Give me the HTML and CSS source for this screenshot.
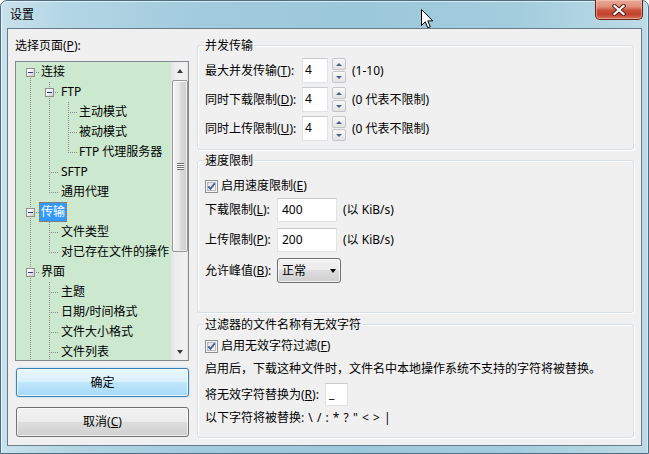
FILE: index.html
```html
<!DOCTYPE html>
<html lang="zh-CN">
<head>
<meta charset="utf-8">
<title>设置</title>
<link rel="stylesheet" href="styles.css">
</head>
<body>
<div class="win">
  <div class="titlebar">
    <span class="title">设置</span>
    <div class="close">
      <svg width="14" height="12" viewBox="0 0 14 12"><path d="M2.5 2 L11.5 10 M11.5 2 L2.5 10" stroke="#5b1f16" stroke-width="4.2" stroke-linecap="square" fill="none"/><path d="M2.5 2 L11.5 10 M11.5 2 L2.5 10" stroke="#ffffff" stroke-width="2.2" stroke-linecap="square" fill="none"/></svg>
    </div>
  </div>
  <div class="client">
    <div class="left">
      <div class="page-label">选择页面(<u>P</u>):</div>
      <div class="tree">
        <div class="tree-items">
          <div class="ti"><span class="c f"><i class="exp"></i></span><span class="lbl">连接</span></div>
          <div class="ti"><span class="c p"></span><span class="c t"><i class="exp"></i></span><span class="lbl l1">FTP</span></div>
          <div class="ti"><span class="c p"></span><span class="c p"></span><span class="c t"></span><span class="lbl">主动模式</span></div>
          <div class="ti"><span class="c p"></span><span class="c p"></span><span class="c t"></span><span class="lbl">被动模式</span></div>
          <div class="ti"><span class="c p"></span><span class="c p"></span><span class="c l"></span><span class="lbl">FTP 代理服务器</span></div>
          <div class="ti"><span class="c p"></span><span class="c t"></span><span class="lbl l1">SFTP</span></div>
          <div class="ti"><span class="c p"></span><span class="c l"></span><span class="lbl l1">通用代理</span></div>
          <div class="ti"><span class="c t"><i class="exp"></i></span><span class="lbl sel">传输</span></div>
          <div class="ti"><span class="c p"></span><span class="c t"></span><span class="lbl l1">文件类型</span></div>
          <div class="ti"><span class="c p"></span><span class="c l"></span><span class="lbl l1">对已存在文件的操作</span></div>
          <div class="ti"><span class="c t"><i class="exp"></i></span><span class="lbl">界面</span></div>
          <div class="ti"><span class="c p"></span><span class="c t"></span><span class="lbl l1">主题</span></div>
          <div class="ti"><span class="c p"></span><span class="c t"></span><span class="lbl l1">日期/时间格式</span></div>
          <div class="ti"><span class="c p"></span><span class="c t"></span><span class="lbl l1">文件大小格式</span></div>
          <div class="ti"><span class="c p"></span><span class="c t"></span><span class="lbl l1">文件列表</span></div>
        </div>
        <div class="vscroll">
          <div class="sbb"><i class="tri-up"></i></div>
          <div class="track"><div class="thumb"><i class="grip"></i></div></div>
          <div class="sbb"><i class="tri-down"></i></div>
        </div>
      </div>
      <div class="btn ok">确定</div>
      <div class="btn cancel">取消(<u>C</u>)</div>
    </div>
    <div class="right">
      <fieldset class="grp g1">
        <legend>并发传输</legend>
        <div class="fr r25"><span class="fl w97">最大并发传输(<u>T</u>):</span><span class="tb num">4</span><span class="spin"><span class="sb"><i class="sa up"></i></span><span class="sb"><i class="sa dn"></i></span></span><span class="hint">(1-10)</span></div>
        <div class="fr r25 mt4"><span class="fl w97">同时下载限制(<u>D</u>):</span><span class="tb num">4</span><span class="spin"><span class="sb"><i class="sa up"></i></span><span class="sb"><i class="sa dn"></i></span></span><span class="hint">(0 代表不限制)</span></div>
        <div class="fr r25 mt4"><span class="fl w97">同时上传限制(<u>U</u>):</span><span class="tb num">4</span><span class="spin"><span class="sb"><i class="sa up"></i></span><span class="sb"><i class="sa dn"></i></span></span><span class="hint">(0 代表不限制)</span></div>
      </fieldset>
      <fieldset class="grp g2">
        <legend>速度限制</legend>
        <div class="cr">
          <svg class="cb" width="13" height="13" viewBox="0 0 13 13"><defs><linearGradient id="cbg" x1="0" y1="0" x2="1" y2="1"><stop offset="0" stop-color="#dcdcdc"/><stop offset="1" stop-color="#fbfbfb"/></linearGradient></defs><rect x="0.5" y="0.5" width="12" height="12" fill="#f4f4f4" stroke="#8e8f8f"/><rect x="2.5" y="2.5" width="8" height="8" fill="url(#cbg)" stroke="#b8bcc2"/><path d="M3.2 6.4 L5.4 8.8 L9.8 3.4" stroke="#4b5f98" stroke-width="1.9" fill="none"/></svg>
          <span>启用速度限制(<u>E</u>)</span>
        </div>
        <div class="fr r24 mt4"><span class="fl w72">下载限制(<u>L</u>):</span><span class="tb w60">400</span><span class="hint">(以 KiB/s)</span></div>
        <div class="fr r24 mt6"><span class="fl w72">上传限制(<u>P</u>):</span><span class="tb w60">200</span><span class="hint">(以 KiB/s)</span></div>
        <div class="fr r25 mt6"><span class="fl w72">允许峰值(<u>B</u>):</span><span class="combo"><span>正常</span><i class="carrow"></i></span></div>
      </fieldset>
      <fieldset class="grp g3">
        <legend>过滤器的文件名称有无效字符</legend>
        <div class="cr">
          <svg class="cb" width="13" height="13" viewBox="0 0 13 13"><defs><linearGradient id="cbg2" x1="0" y1="0" x2="1" y2="1"><stop offset="0" stop-color="#dcdcdc"/><stop offset="1" stop-color="#fbfbfb"/></linearGradient></defs><rect x="0.5" y="0.5" width="12" height="12" fill="#f4f4f4" stroke="#8e8f8f"/><rect x="2.5" y="2.5" width="8" height="8" fill="url(#cbg2)" stroke="#b8bcc2"/><path d="M3.2 6.4 L5.4 8.8 L9.8 3.4" stroke="#4b5f98" stroke-width="1.9" fill="none"/></svg>
          <span>启用无效字符过滤(<u>F</u>)</span>
        </div>
        <div class="line mt7">启用后，下载这种文件时，文件名中本地操作系统不支持的字符将被替换。</div>
        <div class="fr r23 mt6"><span class="fl gap6">将无效字符替换为(<u>R</u>):</span><span class="tb w23">_</span></div>
        <div class="line mt4 chars">以下字符将被替换: \ / : * ? " &lt; &gt; |</div>
      </fieldset>
    </div>
  </div>
  <svg class="cursor" width="13" height="20" viewBox="0 0 13 20"><path d="M0.5 0.5 L0.5 16.5 L4.3 12.8 L6.8 18.8 L9.3 17.8 L6.8 11.9 L11.8 11.9 Z" fill="#fff" stroke="#000" stroke-width="1" stroke-linejoin="miter"/></svg>
</div>
</body>
</html>
```

FILE: styles.css
```css
* { box-sizing: border-box; }
html, body { margin: 0; padding: 0; }
body {
  width: 649px;
  height: 454px;
  overflow: hidden;
  background: #ffffff;
  color: #000;
  font-family: "Noto Sans", "Noto Sans CJK SC", sans-serif;
  font-size: 12px;
  line-height: 16px;
}
u { text-decoration: underline; text-underline-offset: 1px; }

.win {
  position: relative;
  width: 649px;
  height: 454px;
  border: 1px solid #4d6d82;
  border-radius: 7px 7px 0 0;
  padding: 0 6px 7px;
  display: flex;
  flex-direction: column;
  background: linear-gradient(to right, #c9e2ec 0%, #b3d6e5 10%, #a2cbdd 30%, #9cc8db 55%, #a3cddd 80%, #bddbe7 100%);
  box-shadow: inset 1px 1px 0 rgba(255,255,255,0.6), inset -1px 0 0 rgba(255,255,255,0.4);
}

.titlebar {
  height: 27px;
  flex: none;
  display: flex;
  align-items: flex-start;
  justify-content: space-between;
}
.title { margin: 6px 0 0 3px; }
.close {
  width: 48px;
  height: 20px;
  margin: -1px -1px 0 0;
  border: 1px solid #6a2219;
  border-top: none;
  border-radius: 0 0 5px 5px;
  background: linear-gradient(#eaa896 0%, #df8f7a 35%, #c8503a 55%, #c0402b 75%, #d8765d 100%);
  box-shadow: inset 0 0 0 1px rgba(255,220,210,0.45);
  display: flex;
  align-items: center;
  justify-content: center;
}

.client {
  flex: 1;
  display: flex;
  gap: 8px;
  padding: 0 7px;
  background: #f0f0f0;
  border: 1px solid #687c8c;
}

/* left column */
.left {
  width: 174px;
  flex: none;
  display: flex;
  flex-direction: column;
  padding-top: 9px;
}
.page-label { height: 16px; }
.tree {
  margin-top: 7px;
  height: 300px;
  border: 1px solid #828790;
  display: flex;
  flex: none;
}
.tree-items {
  flex: 1;
  background: #cce8cf;
  overflow: hidden;
  padding-left: 4px;
  --v: repeating-linear-gradient(to bottom, #8a8a8a 0 1px, transparent 1px 2px);
  --h: repeating-linear-gradient(to right, #8a8a8a 0 1px, transparent 1px 2px);
}
.ti { display: flex; height: 20px; white-space: nowrap; }
.c { width: 19px; height: 20px; flex: none; display: block; }
.c.p { background: var(--v) 10px 0 / 1px 20px no-repeat; }
.c.t { background: var(--v) 10px 0 / 1px 20px no-repeat, var(--h) 10px 10px / 9px 1px no-repeat; }
.c.l { background: var(--v) 10px 0 / 1px 11px no-repeat, var(--h) 10px 10px / 9px 1px no-repeat; }
.c.f { background: var(--v) 10px 10px / 1px 10px no-repeat, var(--h) 10px 10px / 9px 1px no-repeat; }
.exp {
  display: block;
  width: 9px;
  height: 9px;
  margin: 6px 0 0 6px;
  border: 1px solid #8f8f8f;
  background: linear-gradient(#24417e, #24417e) center / 5px 1px no-repeat, linear-gradient(135deg, #ffffff 25%, #c9c9c9 100%);
}
.lbl {
  height: 20px;
  line-height: 18px;
  padding: 0 1px;
  border: 1px solid transparent;
}
.lbl.l1 { padding-left: 2px; }
.lbl.sel {
  background: #3399ff;
  color: #fff;
  border: 1px dotted #c86a10;
}

.vscroll {
  width: 17px;
  flex: none;
  display: flex;
  flex-direction: column;
  background: linear-gradient(to right, #e2e2e2 0%, #ececec 15%, #f1f1f1 85%, #e6e6e6 100%);
  border-left: 1px solid #e6e6e6;
}
.sbb {
  height: 17px;
  flex: none;
  display: flex;
  align-items: center;
  justify-content: center;
}
.tri-up, .tri-down { display: block; width: 0; height: 0; border-left: 3.5px solid transparent; border-right: 3.5px solid transparent; }
.tri-up { border-bottom: 4px solid #3c3c3c; }
.tri-down { border-top: 4px solid #3c3c3c; }
.track { flex: 1; }
.thumb {
  margin: 1px 0 0 0;
  height: 172px;
  border: 1px solid #979797;
  border-radius: 2px;
  background: linear-gradient(to right, #f3f3f3 0%, #e9e9e9 45%, #d9d9d9 55%, #d0d0d0 100%);
  box-shadow: inset 1px 1px 0 #fdfdfd, inset -1px -1px 0 #ebebeb;
  display: flex;
  align-items: center;
  justify-content: center;
}
.grip {
  display: block;
  width: 7px;
  height: 7px;
  background: repeating-linear-gradient(to bottom, #707070 0 1px, #f6f6f6 1px 2px);
}

.btn {
  flex: none;
  margin-left: 1px;
  width: 173px;
  border-radius: 3px;
  text-align: center;
  display: flex;
  align-items: center;
  justify-content: center;
}
.btn.ok {
  margin-top: 7px;
  height: 29px;
  border: 1px solid #3c7fb1;
  background: linear-gradient(#eaf6fd 0%, #d9f0fc 50%, #bee6fd 50%, #a7d9f5 100%);
  box-shadow: inset 0 0 0 1px rgba(255,255,255,0.75), 0 0 2px #8fd0f5;
}
.btn.cancel {
  margin-top: 10px;
  height: 30px;
  border: 1px solid #707070;
  background: linear-gradient(#f2f2f2 0%, #ebebeb 50%, #dddddd 50%, #cfcfcf 100%);
  box-shadow: inset 0 0 0 1px rgba(255,255,255,0.7);
}

/* right column */
.right {
  flex: 1;
  min-width: 0;
  padding-top: 8px;
  display: flex;
  flex-direction: column;
}
.grp {
  margin: 0;
  min-width: 0;
  border: 1px solid #d5dfe5;
  border-radius: 3px;
  padding: 0 7px 8px 7px;
  box-shadow: inset 1px 1px 0 #ffffff, 1px 1px 0 #ffffff;
}
.grp legend {
  margin-left: -1px;
  padding: 1px 1px 0;
  line-height: 16px;
  background: #f0f0f0;
}
.g1 { padding-top: 4px; padding-bottom: 8px; }
.g2 { margin-top: 2px; padding-top: 9px; padding-bottom: 29px; }
.g3 { margin-top: 3px; padding-top: 5px; padding-bottom: 11px; }

.fr { display: flex; align-items: center; white-space: nowrap; }
.r25 { height: 25px; }
.r24 { height: 24px; }
.r23 { height: 23px; }
.mt4 { margin-top: 4px; }
.mt6 { margin-top: 6px; }
.mt7 { margin-top: 7px; }
.w97 { width: 97px; flex: none; }
.w72 { width: 72px; flex: none; }
.gap6 { margin-right: 6px; }

.tb {
  display: block;
  height: 100%;
  background: #fff;
  border: 1px solid #e0e3e7;
  border-top-color: #c7cace;
  line-height: 21px;
  flex: none;
}
.tb.num { width: 26px; padding-left: 2px; }
.tb.w60 { width: 60px; padding-left: 4px; }
.tb.w23 { width: 23px; padding-left: 3px; line-height: 20px; }

.spin {
  margin-left: 4px;
  width: 14px;
  height: 25px;
  display: flex;
  flex-direction: column;
  gap: 1px;
  flex: none;
}
.sb {
  flex: 1;
  border: 1px solid #c3c6ca;
  border-radius: 2px;
  background: linear-gradient(#f8f8f8, #e3e3e3);
  display: flex;
  align-items: center;
  justify-content: center;
}
.sa { display: block; width: 0; height: 0; border-left: 3px solid transparent; border-right: 3px solid transparent; }
.sa.up { border-bottom: 3px solid #4d5e86; }
.sa.dn { border-top: 3px solid #4d5e86; }
.hint { margin-left: 6px; }

.cr { display: flex; align-items: center; gap: 3px; height: 16px; white-space: nowrap; }
.cb { display: block; flex: none; }

.combo {
  width: 64px;
  height: 25px;
  border: 1px solid #707070;
  border-radius: 3px;
  background: linear-gradient(#f2f2f2 0%, #ebebeb 50%, #dddddd 50%, #cfcfcf 100%);
  box-shadow: inset 0 0 0 1px rgba(255,255,255,0.7);
  display: flex;
  align-items: center;
  justify-content: space-between;
  padding: 0 4px 0 4px;
  flex: none;
}
.carrow { display: block; width: 0; height: 0; border-left: 3.5px solid transparent; border-right: 3.5px solid transparent; border-top: 4px solid #000; }

.line { height: 16px; white-space: nowrap; }
.chars { word-spacing: 1px; }

.cursor { position: absolute; left: 420px; top: 8px; }
```
